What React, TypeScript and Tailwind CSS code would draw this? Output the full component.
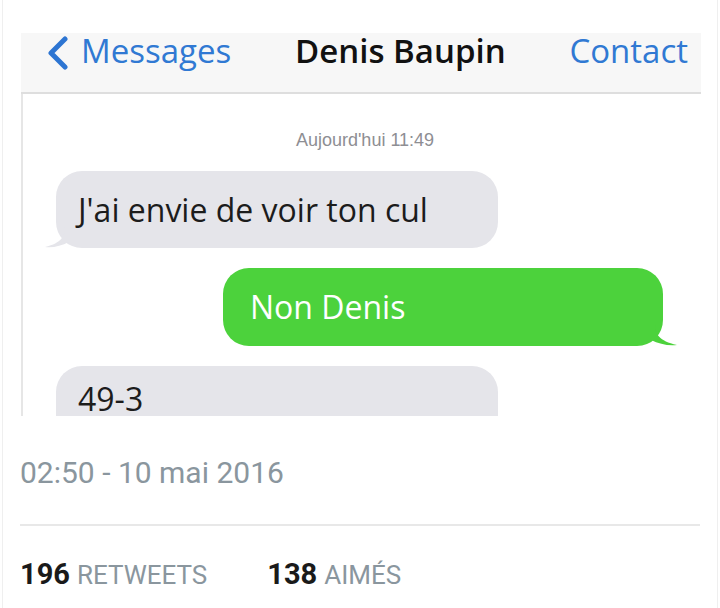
import React from 'react'

const SANS = { fontFamily: '"Open Sans", "Noto Sans", sans-serif' }

function TailLeft() {
  return (
    <svg className="absolute left-[-11px] bottom-0" width="24" height="22" viewBox="0 0 24 22">
      <path d="M20 0 C20 10 17 17 0 21 C8 22 16 20 24 16 L24 0 Z" fill="#e5e5ea" />
    </svg>
  )
}

function TailRight() {
  return (
    <svg className="absolute right-[-14px] bottom-0" width="26" height="22" viewBox="0 0 26 22">
      <path d="M4 0 C4 10 8 17 26 21 C17 22 8 20 0 16 L0 0 Z" fill="#4cd23c" />
    </svg>
  )
}

export default function App() {
  return (
    <div className="w-[720px] h-[608px] bg-white overflow-hidden">
      <div className="mx-[2px] h-full border-x border-[#efefef] flex flex-col">
        <div className="ml-[18px] mt-[33px] w-[680px] h-[383px] flex flex-col" style={SANS}>
          <div className="h-[61px] bg-[#f7f7f7] border-b-2 border-[#dedede] flex items-start justify-between pl-[25px] pr-[13px] pt-[1px] shrink-0">
            <div className="flex items-start text-[#3079d3] text-[33px] leading-none">
              <svg width="24" height="34" viewBox="0 0 24 34" className="mr-[11px] mt-[2px]">
                <path d="M19 3 L5 17 L19 31" fill="none" stroke="#2d75d2" strokeWidth="5" strokeLinecap="round" strokeLinejoin="round" />
              </svg>
              <span>Messages</span>
            </div>
            <div className="text-[33px] leading-none font-semibold text-[#111]">Denis Baupin</div>
            <div className="text-[33px] leading-none text-[#3079d3]">Contact</div>
          </div>
          <div className="flex-1 min-h-0 border-l-2 border-[#e6e6e6] flex flex-col">
            <div className="text-center text-[18px] text-[#8e8e93] mt-[37px] leading-none pl-[6px]" style={{ fontFamily: '"Liberation Sans", Arial, sans-serif' }}>
              Aujourd'hui 11:49
            </div>
            <div className="relative self-start ml-[33px] mt-[22px] w-[442px] h-[77px] shrink-0 rounded-[26px] bg-[#e5e5ea] flex items-center pl-[22px] text-[32px] text-[#1c1c1c] leading-none">
              <TailLeft />
              <span className="relative">J'ai envie de voir ton cul</span>
            </div>
            <div className="relative self-start ml-[200px] mt-[20px] w-[440px] h-[78px] shrink-0 rounded-[26px] bg-[#4cd23c] flex items-center pl-[27px] text-[32px] text-white leading-none">
              <TailRight />
              <span className="relative">Non Denis</span>
            </div>
            <div className="self-start ml-[33px] mt-[20px] w-[442px] h-[50px] shrink-0 rounded-t-[26px] bg-[#e5e5ea] pl-[22px] pt-[19px] text-[32px] text-[#1c1c1c] leading-[28px]">
              49-3
            </div>
          </div>
        </div>
        <div className="px-[17px]" style={{ fontFamily: 'Roboto, sans-serif' }}>
          <div className="text-[30px] text-[#8a969e] leading-none mt-[42px]">02:50 - 10 mai 2016</div>
          <div className="mt-[36px] border-t-2 border-[#e8e8e8]" />
          <div className="flex items-baseline mt-[34px] leading-none">
            <span className="text-[29px] font-bold text-[#1a1a1a]">196</span>
            <span className="ml-[7px] text-[26px] text-[#8a969e] uppercase">Retweets</span>
            <span className="ml-[60px] text-[29px] font-bold text-[#1a1a1a]">138</span>
            <span className="ml-[7px] text-[26px] text-[#8a969e] uppercase">Aimés</span>
          </div>
        </div>
      </div>
    </div>
  )
}
